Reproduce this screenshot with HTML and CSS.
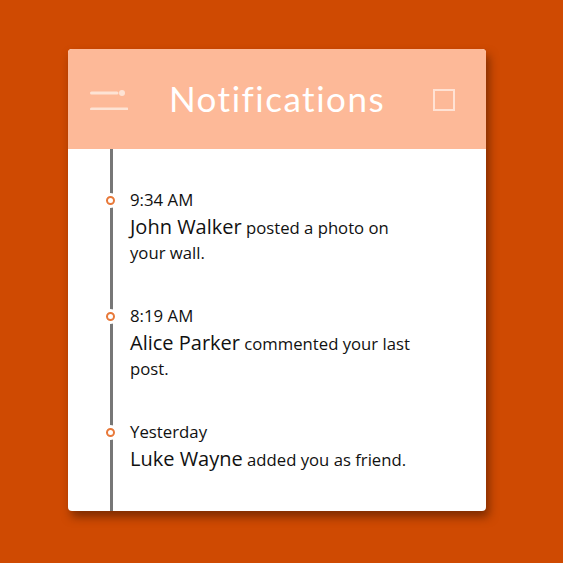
FILE: index.html
```html
<!DOCTYPE html>
<html>
<head>
<meta charset="utf-8">
<link rel="stylesheet" href="styles.css">
</head>
<body>
<div class="card">
  <header class="header">
    <svg class="menu" width="38" height="22" viewBox="0 0 38 22">
      <line x1="1.5" y1="5" x2="27" y2="5" stroke="#fde3d4" stroke-width="3" stroke-linecap="round"/>
      <circle cx="32" cy="5" r="3" fill="#fde3d4"/>
      <line x1="1.5" y1="21" x2="37" y2="21" stroke="#fde3d4" stroke-width="3" stroke-linecap="round"/>
    </svg>
    <h1 class="title">Notifications</h1>
    <span class="square"></span>
  </header>
  <div class="timeline">
    <div class="item">
      <span class="dot"></span>
      <div class="time">9:34 AM</div>
      <div class="text"><span class="name">John Walker</span> posted a photo on your wall.</div>
    </div>
    <div class="item">
      <span class="dot"></span>
      <div class="time">8:19 AM</div>
      <div class="text"><span class="name">Alice Parker</span> commented your last post.</div>
    </div>
    <div class="item">
      <span class="dot"></span>
      <div class="time">Yesterday</div>
      <div class="text"><span class="name">Luke Wayne</span> added you as friend.</div>
    </div>
  </div>
</div>
</body>
</html>
```
FILE: styles.css
```css
html, body {
  margin: 0;
  padding: 0;
}
body {
  background: #cf4a02;
  width: 563px;
  height: 563px;
  overflow: hidden;
  font-family: "Open Sans", "DejaVu Sans", sans-serif;
}
.card {
  margin: 49px 0 0 68px;
  width: 418px;
  height: 462px;
  background: #ffffff;
  border-radius: 4px;
  overflow: hidden;
  box-shadow: 3px 6px 10px rgba(60, 20, 0, 0.55);
  display: flex;
  flex-direction: column;
}
.header {
  height: 100px;
  background: #fdb998;
  display: grid;
  grid-template-columns: 1fr auto 1fr;
  align-items: center;
  padding: 0 31px;
  flex-shrink: 0;
}
.menu {
  justify-self: start;
  display: block;
  margin: -1px 0 0 -9px;
}
.title {
  margin: 0 0 3px;
  font-family: "Lato", sans-serif;
  font-weight: 400;
  font-size: 35px;
  color: #ffffff;
  letter-spacing: 1.5px;
}
.square {
  justify-self: end;
  width: 18px;
  height: 18px;
  border: 2px solid rgba(255, 240, 232, 0.75);
  margin-top: 1px;
}
.timeline {
  position: relative;
  flex: 1;
  padding: 40px 20px 0 62px;
  display: flex;
  flex-direction: column;
  gap: 40px;
}
.timeline::before {
  content: "";
  position: absolute;
  left: 42px;
  top: 0;
  bottom: 0;
  width: 3px;
  background: #777777;
}
.item {
  position: relative;
}
.dot {
  position: absolute;
  left: -24px;
  top: 7px;
  width: 5px;
  height: 5px;
  border: 2.5px solid #e8793a;
  border-radius: 50%;
  background: #ffffff;
  box-shadow: 0 0 0 3px #ffffff;
}
.time {
  font-size: 16.8px;
  line-height: 22px;
  color: #111111;
  margin-bottom: 3px;
}
.text {
  font-size: 16.7px;
  line-height: 25px;
  color: #111111;
  width: 285px;
}
.name {
  font-size: 20px;
}
```
